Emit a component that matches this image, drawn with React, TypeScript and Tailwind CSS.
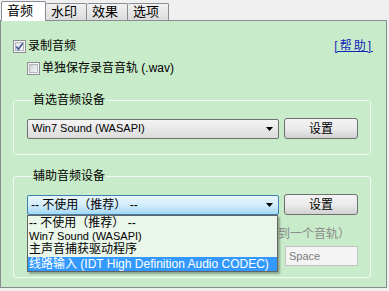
const font = { fontFamily: "'Liberation Sans', 'Noto Sans CJK SC', sans-serif" };

const CheckBox = ({ checked = false }: { checked?: boolean }) => (
  <svg width="13" height="13" viewBox="0 0 13 13" className="shrink-0">
    <defs>
      <linearGradient id={checked ? "cbOn" : "cbOff"} x1="0" y1="0" x2="1" y2="1">
        <stop offset="0" stopColor={checked ? "#dfe3ea" : "#cbcfd5"} />
        <stop offset="1" stopColor="#f8f8f8" />
      </linearGradient>
    </defs>
    <rect x="0.5" y="0.5" width="12" height="12" fill="#f4f4f4" stroke="#8e8f8f" />
    <rect x="2.5" y="2.5" width="8" height="8" fill={`url(#${checked ? "cbOn" : "cbOff"})`} stroke="#b4b8be" />
    {checked && (
      <path d="M3.3 6.4 L5.4 9.2 L9.8 3.2" fill="none" stroke="#4a5f97" strokeWidth="1.7" />
    )}
  </svg>
);

const Arrow = () => (
  <svg width="7" height="4" viewBox="0 0 7 4" className="shrink-0">
    <path d="M0 0 H7 L3.5 4 Z" fill="#000" />
  </svg>
);

const Button = ({ label }: { label: string }) => (
  <button className="w-[74px] h-[21px] rounded-[3px] border border-[#707070] bg-gradient-to-b from-[#f3f3f3] via-[#ebebeb] to-[#d2d2d2] text-[12px] leading-[14px] text-black">
    {label}
  </button>
);

const tabs = ["水印", "效果", "选项"];

export default function App() {
  return (
    <div className="w-[389px] h-[291px] bg-[#f0f0f0] text-black text-[12px] overflow-hidden" style={font}>
      {/* tab strip */}
      <div className="flex items-end h-[20px] pl-[1px]">
        <div className="relative z-10 -mb-px h-[20px] w-[45px] border border-b-0 border-[#898c95] rounded-t-[2px] bg-white flex items-center pl-[5px] pb-[2px] text-[13px] leading-[14px]">
          音频
        </div>
        {tabs.map((t) => (
          <div
            key={t}
            className="h-[17px] w-[41px] border border-l-0 border-b-0 border-[#898c95] rounded-t-[2px] bg-gradient-to-b from-[#f2f2f2] to-[#dcdcdc] flex items-center pl-[5px] leading-[14px] text-[13px]"
          >
            {t}
          </div>
        ))}
      </div>

      {/* page */}
      <div className="w-[387px] h-[268px] border border-[#898c95] bg-[#c8ecc9] flex flex-col">
        <div className="mt-[19px] flex items-center h-[13px] pl-[12px] pr-[13px]">
          <CheckBox checked />
          <span className="ml-[2px] leading-[13px]">录制音频</span>
          <a className="ml-auto text-[#1526b8] underline leading-[13px] tracking-[2px]">[帮助]</a>
        </div>
        <div className="mt-[9px] flex items-center h-[13px] pl-[26px]">
          <CheckBox />
          <span className="ml-[2px] leading-[13px]">单独保存录音音轨 (.wav)</span>
        </div>

        {/* preferred device */}
        <fieldset className="mt-[17px] ml-[12px] w-[358px] border border-[#f2f8f2] rounded-[3px] pl-[13px] pr-[12px] pt-[10px] pb-[15px]">
          <legend className="ml-[5px] px-[1px] leading-[16px]">首选音频设备</legend>
          <div className="flex items-center gap-[5px]">
            <div className="w-[252px] h-[20px] rounded-[2px] border border-[#707070] bg-gradient-to-b from-[#f4f4f4] to-[#dcdcdc] flex items-center pl-[4px] pr-[5px]">
              <span className="text-[11px]">Win7 Sound (WASAPI)</span>
              <span className="ml-auto">
                <Arrow />
              </span>
            </div>
            <Button label="设置" />
          </div>
        </fieldset>

        {/* secondary device */}
        <fieldset className="mt-[13px] ml-[12px] w-[358px] border border-[#f2f8f2] rounded-[3px] pl-[13px] pr-[12px] pt-[10px] pb-[11px]">
          <legend className="ml-[5px] px-[1px] leading-[16px]">辅助音频设备</legend>
          <div className="flex items-center gap-[5px]">
            <div className="relative">
              <div className="w-[252px] h-[20px] rounded-[2px] border border-[#3c7fb1] bg-gradient-to-b from-[#eaf6fd] via-[#d3edfb] to-[#a3d8f5] flex items-center pl-[3px] pr-[5px]">
                <span>-- 不使用（推荐） --</span>
                <span className="ml-auto">
                  <Arrow />
                </span>
              </div>
              {/* open list */}
              <div className="absolute z-20 left-0 top-full w-[251px] border border-[#646464] bg-[#eaf7ea] shadow-[2px_2px_2px_rgba(0,0,0,0.3)] flex flex-col">
                <div className="h-[14px] leading-[14px] pl-[1px]">-- 不使用（推荐） --</div>
                <div className="h-[12px] leading-[12px] pl-[1px] text-[11px]">Win7 Sound (WASAPI)</div>
                <div className="h-[15px] leading-[15px] pl-[1px]">主声音捕获驱动程序</div>
                <div className="h-[14px] leading-[14px] pl-[1px] bg-[#3399ff] text-white whitespace-nowrap">
                  线路输入 (IDT High Definition Audio CODEC)
                </div>
              </div>
            </div>
            <Button label="设置" />
          </div>
          <div className="mt-[12px] h-[14px] flex items-center pl-[251px]">
            <span className="text-[#8a8a8a] leading-[14px] whitespace-nowrap">到一个音轨）</span>
          </div>
          <div className="mt-[5px] flex items-center justify-end">
            <div className="w-[73px] h-[20px] border border-[#c3c3c3] bg-[#f4f4f4] flex items-center pl-[3px] text-[11px] text-[#7a7a7a]">
              Space
            </div>
          </div>
        </fieldset>
      </div>
    </div>
  );
}
